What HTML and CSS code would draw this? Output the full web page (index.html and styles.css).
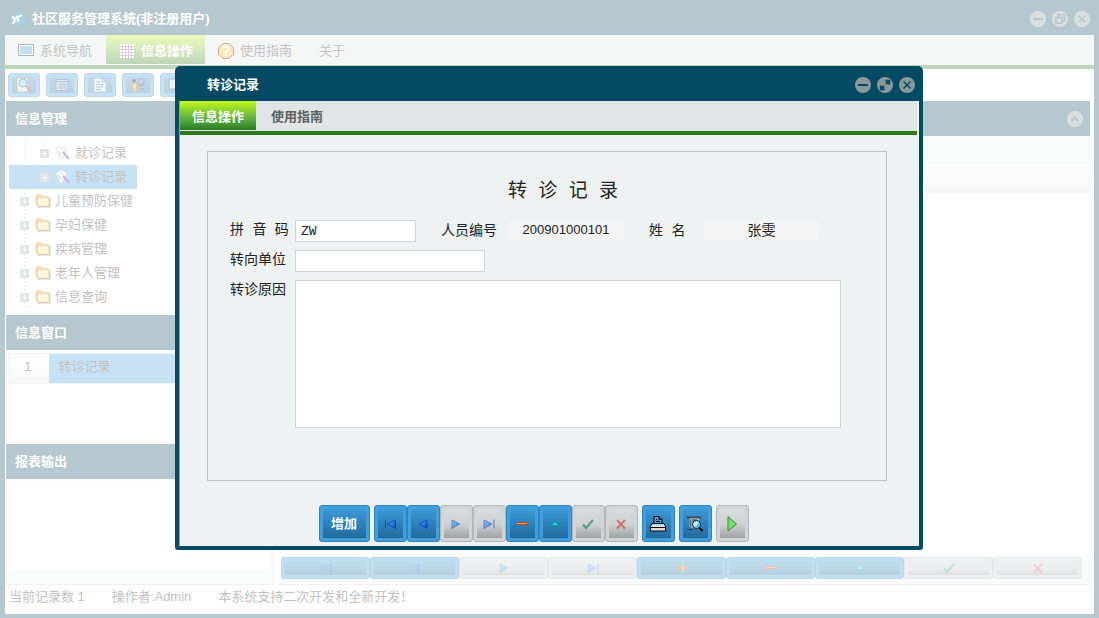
FILE: index.html
```
<!DOCTYPE html>
<html lang="zh-CN">
<head>
    <meta charset="UTF-8">
    <meta name="viewport" content="width=device-width, initial-scale=1">
    <title>社区服务管理系统</title>
    <link rel="stylesheet" href="styles.css">
</head>
<body>
    <!-- shared icons -->
    <svg class="sprite" aria-hidden="true">
        <defs>
            <linearGradient id="arrowFill" x1="0" y1="0" x2="1" y2="1">
                <stop offset="0" stop-color="#5bc4ff"/>
                <stop offset="1" stop-color="#0340b8"/>
            </linearGradient>
        </defs>
        <symbol id="first" viewBox="0 0 12 12"><path d="M1 1.500h1v9h-1z" fill="#0849c4"/><path d="M11.500 2v8.500L3.500 6z" fill="url(#arrowFill)" stroke="#0849c4"/></symbol>
        <symbol id="prev" viewBox="0 0 12 12"><path d="M10 2v8.500L2.500 6z" fill="url(#arrowFill)" stroke="#0849c4"/></symbol>
        <symbol id="next" viewBox="0 0 12 12"><path d="M2 2v8.500L9.500 6z" fill="url(#arrowFill)" stroke="#0849c4"/></symbol>
        <symbol id="last" viewBox="0 0 12 12"><path d="M10.500 1.500h1v9h-1z" fill="#0849c4"/><path d="M1 2v8.500L9 6z" fill="url(#arrowFill)" stroke="#0849c4"/></symbol>
        <symbol id="plus" viewBox="0 0 12 12"><path d="M5 1h3v3.500h3v3h-3v3.500h-3v-3.500h-3v-3h3z" fill="#e8410c"/><path d="M6 2h1v8h-1zM3 5.500h7v1h-7z" fill="#ff9a50"/></symbol>
        <symbol id="minus" viewBox="0 0 12 12"><path d="M1 4h10v3h-10z" fill="#dc3a08"/><path d="M1 5h10v1h-10z" fill="#ff9a3c"/></symbol>
        <symbol id="up" viewBox="0 0 12 12"><path d="M6 3l5.500 5h-11z" fill="#0b93a0"/><path d="M6 4l3 3h-6z" fill="#22dbe0"/></symbol>
        <symbol id="check" viewBox="0 0 12 12"><path d="M1 6.500l3 3.500 7-8" fill="none" stroke="#0a7a36" stroke-width="2"/></symbol>
        <symbol id="cross" viewBox="0 0 12 12"><path d="M2 2l8 8.500M10 2l-8 8.500" fill="none" stroke="#d63422" stroke-width="2"/></symbol>
        <symbol id="expand" viewBox="0 0 9 9"><path class="box" d="M0 0h9v9h-9z"/><path d="M4 2h1v5h-1zM2 4h5v1h-5z" fill="#fff"/></symbol>
        <symbol id="folder" viewBox="0 0 16 14"><path d="M1 3l1-2h4l1 2h7v9h-12z" fill="#f7e4b4" stroke="#e6cd98"/><path d="M3 4.500h10.500v7h-10.500z" fill="#fff8dc"/><path d="M2 13h13v-9" fill="none" stroke="#cfc8b4"/></symbol>
        <symbol id="wand" viewBox="0 0 16 16"><path d="M1 4l4-2 2-1 3 2 2 3-3 1 0 3-2 4-3-2-1-4z" fill="#fff" stroke="#e3e6e8"/><path d="M3 6l3 3M6 3l2 3M4 11l2-2" stroke="#cfd6dc" fill="none"/><path d="M8 7l6 7" stroke="#cdb4e6" stroke-width="2"/></symbol>
        <symbol id="circMin" viewBox="0 0 16 16"><circle cx="8" cy="8" r="8" class="disc"/><path d="M3 8h10" class="ink"/></symbol>
        <symbol id="circClose" viewBox="0 0 16 16"><circle cx="8" cy="8" r="8" class="disc"/><path d="M4.500 4.500l7 7M11.500 4.500l-7 7" class="ink thin"/></symbol>
        <symbol id="circRestore" viewBox="0 0 16 16"><circle cx="8" cy="8" r="8" class="disc"/><path d="M6 6v-2.500h6.500v6.500h-2.500M4 6.500h6v5.500h-6z" class="ink thin"/></symbol>
        <symbol id="circMax" viewBox="0 0 16 16"><circle cx="8" cy="8" r="8" class="disc"/><path d="M9 7l3-3M7 9l-3 3M8.500 3.800h3.700v3.700M3.800 8.500v3.700h3.700" class="ink"/></symbol>
        <symbol id="circUp" viewBox="0 0 16 16"><circle cx="8" cy="8" r="8" class="disc"/><path d="M4.500 10l3.500-3.500 3.500 3.500" class="ink"/></symbol>
    </svg>

    <div class="window">
        <header class="titlebar">
            <svg class="logo" width="16" height="14" viewBox="0 0 16 14" aria-hidden="true"><path d="M3 13q-3-1-2-5 1-3 3-3 2-5 6-4 3 1 3 4 3 2 2 5-1 3-4 3z" fill="#a9d3e6"/><path d="M2 4l3 4 2-4M5 8l-2 4M8 10v-5q2-2 4-1" fill="none" stroke="#fff" stroke-width="2"/></svg>
            <h1 class="title">社区服务管理系统(非注册用户)</h1>
            <div class="window-controls">
                <button type="button" aria-label="最小化"><svg><use href="#circMin"/></svg></button>
                <button type="button" aria-label="还原"><svg><use href="#circRestore"/></svg></button>
                <button type="button" aria-label="关闭"><svg><use href="#circClose"/></svg></button>
            </div>
        </header>

        <nav class="menu">
            <a href="#" class="menu-item">
                <svg width="16" height="16" viewBox="0 0 16 16"><path d="M.5 1.500h15v11h-15z" fill="#fff" stroke="#aab3b5"/><path d="M2 3h12v8h-12z" fill="#c2dfed"/></svg>系统导航
            </a>
            <a href="#" class="menu-item active">
                <svg width="16" height="16" viewBox="0 0 16 16"><path d="M1 1h14v14h-14z" fill="#fff"/><path d="M3.500 1v14M6.500 1v14M9.500 1v14M12.500 1v14M1 3.500h14M1 6.500h14M1 9.500h14M1 12.500h14" stroke="#d9cfe2"/></svg>信息操作
            </a>
            <a href="#" class="menu-item">
                <svg width="16" height="16" viewBox="0 0 16 16"><path d="M5 .5h6l4.500 4.500v6l-4.500 4.500h-6l-4.500-4.500v-6z" fill="#ffeab8" stroke="#c9aaa6"/><path d="M5.500 5.500q0-2 2.500-2t2.500 2q0 1.500-2.500 3v1.500M8 11v2" fill="none" stroke="#fff" stroke-width="2"/></svg>使用指南
            </a>
            <a href="#" class="menu-item">关于</a>
        </nav>

        <div class="toolbar">
            <button type="button" aria-label="预览"><svg viewBox="0 0 16 16"><path d="M1 1h11v14h-11z" fill="#f2f5f7" stroke="#d2cfcb"/><circle cx="7" cy="6" r="4" fill="#d5effa" stroke="#b2c8d4"/><path d="M10 9l4 5" stroke="#e4b6a0" stroke-width="2"/></svg></button>
            <button type="button" aria-label="表单"><svg viewBox="0 0 16 16"><path d="M2 2.500h12v11h-12z" fill="#e1edf4" stroke="#b4c6d2"/><path d="M2 4.500h12M7 5v8M4 7h2M4 9h2M4 11h2M8 7h5M8 9h5M8 11h5" stroke="#b4c6d2"/></svg></button>
            <button type="button" aria-label="文档"><svg viewBox="0 0 16 16"><path d="M2 1h8l4 4v10h-12z" fill="#f1f8fc" stroke="#c0d7e3"/><path d="M10 1v4h4M4 5h4M4 7.500h7M4 10h7M4 12.500h5" fill="none" stroke="#b4cbdc"/></svg></button>
            <button type="button" aria-label="用户"><svg viewBox="0 0 16 16"><circle cx="4" cy="4" r="2" fill="#b7a8a0"/><path d="M2 6h5v5h-1v4h-3v-4h-1z" fill="#f7e5c2" stroke="#d7c5aa"/><path d="M8 2h6v5h-6z" fill="#cfd2f2" stroke="#b9bccb"/><path d="M8 9h6M9 12h5" stroke="#c4c6c9" stroke-width="2"/></svg></button>
            <button type="button" aria-label="屏幕"><svg viewBox="0 0 16 16"><path d="M1 2h13v10h-13z" fill="#e9f4fa" stroke="#b3bec4"/><path d="M7 12h6v3" fill="none" stroke="#c9a9a9"/></svg></button>
        </div>

        <div class="workspace">
            <aside class="sidebar">
                <section class="tree-panel">
                    <h2 class="panel-title">信息管理</h2>
                    <ul class="tree">
                        <li class="child"><a href="#"><svg class="expander"><use href="#expand"/></svg><svg class="node-icon"><use href="#wand"/></svg>就诊记录</a></li>
                        <li class="child selected"><a href="#"><svg class="expander"><use href="#expand"/></svg><svg class="node-icon"><use href="#wand"/></svg>转诊记录</a></li>
                        <li><a href="#"><svg class="expander"><use href="#expand"/></svg><svg class="node-icon"><use href="#folder"/></svg>儿童预防保健</a></li>
                        <li><a href="#"><svg class="expander"><use href="#expand"/></svg><svg class="node-icon"><use href="#folder"/></svg>孕妇保健</a></li>
                        <li><a href="#"><svg class="expander"><use href="#expand"/></svg><svg class="node-icon"><use href="#folder"/></svg>疾病管理</a></li>
                        <li><a href="#"><svg class="expander"><use href="#expand"/></svg><svg class="node-icon"><use href="#folder"/></svg>老年人管理</a></li>
                        <li><a href="#"><svg class="expander"><use href="#expand"/></svg><svg class="node-icon"><use href="#folder"/></svg>信息查询</a></li>
                    </ul>
                </section>
                <section class="list-panel">
                    <h2 class="panel-title">信息窗口</h2>
                    <div class="list-body">
                        <table class="window-list">
                            <tr><th scope="row">1</th><td>转诊记录</td></tr>
                        </table>
                    </div>
                </section>
                <section class="report-panel">
                    <h2 class="panel-title">报表输出</h2>
                    <div class="report-body"></div>
                </section>
            </aside>

            <main class="content">
                <div class="panel-title content-title">
                    <button type="button" aria-label="折叠"><svg><use href="#circUp"/></svg></button>
                </div>
                <div class="filter-row"></div>
                <div class="grid-head"></div>
                <div class="grid-body"></div>
                <div class="navigator">
                    <button type="button" class="btn blue" aria-label="首记录"><svg><use href="#first"/></svg></button>
                    <button type="button" class="btn blue" aria-label="上一条"><svg><use href="#prev"/></svg></button>
                    <button type="button" class="btn gray dim" aria-label="下一条"><svg><use href="#next"/></svg></button>
                    <button type="button" class="btn gray dim" aria-label="末记录"><svg><use href="#last"/></svg></button>
                    <button type="button" class="btn blue" aria-label="新增"><svg><use href="#plus"/></svg></button>
                    <button type="button" class="btn blue" aria-label="删除"><svg><use href="#minus"/></svg></button>
                    <button type="button" class="btn blue" aria-label="编辑"><svg><use href="#up"/></svg></button>
                    <button type="button" class="btn gray dim" aria-label="保存"><svg><use href="#check"/></svg></button>
                    <button type="button" class="btn gray dim" aria-label="取消"><svg><use href="#cross"/></svg></button>
                </div>
            </main>
        </div>

        <footer class="statusbar">
            <span>当前记录数 1</span>
            <span>操作者:Admin</span>
            <span>本系统支持二次开发和全新开发！</span>
        </footer>
    </div>

    <!-- record dialog -->
    <div class="overlay">
        <div class="dialog" role="dialog" aria-labelledby="dialogTitle">
            <header class="dialog-bar">
                <h2 class="title" id="dialogTitle">转诊记录</h2>
                <div class="window-controls">
                    <button type="button" aria-label="最小化"><svg><use href="#circMin"/></svg></button>
                    <button type="button" aria-label="最大化"><svg><use href="#circMax"/></svg></button>
                    <button type="button" aria-label="关闭"><svg><use href="#circClose"/></svg></button>
                </div>
            </header>
            <form class="dialog-body">
                <nav class="tabs">
                    <a href="#" class="tab active">信息操作</a>
                    <a href="#" class="tab">使用指南</a>
                </nav>
                <div class="sheet">
                    <h3 class="sheet-title">转 诊 记 录</h3>
                    <div class="fields">
                        <label for="pinyin">拼 音 码</label>
                        <div class="field-row">
                            <input type="text" id="pinyin" class="short" value="ZW">
                            <label for="personNo">人员编号</label>
                            <output id="personNo">200901000101</output>
                            <label for="personName" class="name-label">姓 名</label>
                            <output id="personName" class="person-name">张雯</output>
                        </div>
                        <label for="unit">转向单位</label>
                        <input type="text" id="unit" class="medium">
                        <label for="reason">转诊原因</label>
                        <textarea id="reason"></textarea>
                    </div>
                </div>
                <div class="actions">
                    <button type="button" class="btn blue add">增加</button>
                    <div class="btn-group">
                        <button type="button" class="btn blue" aria-label="首记录"><svg><use href="#first"/></svg></button>
                        <button type="button" class="btn blue" aria-label="上一条"><svg><use href="#prev"/></svg></button>
                        <button type="button" class="btn gray dim" aria-label="下一条"><svg><use href="#next"/></svg></button>
                        <button type="button" class="btn gray dim" aria-label="末记录"><svg><use href="#last"/></svg></button>
                        <button type="button" class="btn blue" aria-label="删除"><svg><use href="#minus"/></svg></button>
                        <button type="button" class="btn blue" aria-label="编辑"><svg><use href="#up"/></svg></button>
                        <button type="button" class="btn gray dim" aria-label="保存"><svg><use href="#check"/></svg></button>
                        <button type="button" class="btn gray dim" aria-label="取消"><svg><use href="#cross"/></svg></button>
                    </div>
                    <button type="button" class="btn blue tool" aria-label="打印"><svg viewBox="0 0 16 16"><path d="M4 7.500v-7h5l3 3v4z" fill="#4ba5dc" stroke="#000"/><path d="M9 .5v3h3M6 3.500h1M6 5.500h4" fill="none" stroke="#000"/><path d="M2 7.500h12l1.500 3v4.500h-15v-4.500z" fill="#eee" stroke="#000"/><path d="M2 9h12" stroke="#3c9be0" stroke-dasharray="1 1"/><path d="M1 11.500h14" stroke="#000"/><path d="M1 13h14" stroke="#c8c4ac"/></svg></button>
                    <button type="button" class="btn blue tool" aria-label="打印预览"><svg viewBox="0 0 16 16"><path d="M0 1.500h14" stroke="#43484c" stroke-width="2"/><path d="M2.500 3h9v8h-9z" fill="#6ba9d2" stroke="#d9dedf"/><path d="M3 3v9M0 13.500h6M5 4h5" stroke="#333b42"/><circle cx="9.500" cy="8.500" r="4" fill="#c6f0ff" stroke="#111"/><path d="M8 11q4 0 4-4" fill="none" stroke="#3fb9ff" stroke-width="2"/><path d="M12.500 12l3 3" stroke="#000" stroke-width="2"/></svg></button>
                    <button type="button" class="btn gray tool" aria-label="执行"><svg viewBox="0 0 16 16"><path d="M4 .5v14.500l8.500-7z" fill="#62e862" stroke="#5d6b60"/></svg></button>
                </div>
            </form>
        </div>
    </div>
</body>
</html>
```

FILE: styles.css
```
* {
    box-sizing: border-box;
    margin: 0;
    padding: 0;
}
body {
    --disc: #d9dfe1;
    --ink: #b5c8cf;
    font-family: "Liberation Sans", "Noto Sans CJK SC", sans-serif;
    font-size: 13px;
    line-height: 20px;
    color: #c3c3c3;
    background: #b5c8cf;
}
a {
    color: inherit;
    text-decoration: none;
}
button {
    font: inherit;
    cursor: pointer;
}
svg {
    flex: none;
}
.sprite {
    position: absolute;
    width: 0;
    height: 0;
}
.title {
    flex: 1;
    font-size: 13px;
    font-weight: bold;
    color: #fff;
}

/* main window */
.window {
    display: flex;
    flex-direction: column;
    min-height: 100vh;
    padding: 0 5px 4px;
    background: #b5c8cf;
}
.titlebar {
    display: flex;
    align-items: center;
    gap: 6px;
    height: 35px;
    padding: 2px 4px 0 5px;
}
.window-controls {
    display: flex;
    gap: 6px;
}
.window-controls button,
.content-title button {
    width: 16px;
    height: 16px;
    border: none;
    background: none;
}
.window-controls svg,
.content-title svg {
    display: block;
    width: 16px;
    height: 16px;
}
.disc {
    fill: var(--disc);
}
.ink {
    fill: none;
    stroke: var(--ink);
    stroke-width: 2;
}
.thin {
    stroke-width: 1.5;
}
.menu {
    display: flex;
    height: 34px;
    background: #f5f7f7;
    border-bottom: 4px solid #c0d6bb;
}
.menu-item {
    display: flex;
    align-items: center;
    gap: 6px;
    padding: 2px 14px 0 13px;
    margin-bottom: 1px;
}
.menu-item.active {
    padding-right: 12px;
    font-weight: bold;
    color: #fff;
    background: linear-gradient(#eef9b9, #cfe5bf 60%, #bdd5b9);
}
.toolbar {
    display: flex;
    gap: 6px;
    height: 32px;
    padding: 4px 3px;
    background: #fff;
}
.toolbar button {
    display: flex;
    align-items: center;
    justify-content: center;
    width: 32px;
    height: 24px;
    padding: 3px;
    border: 1px solid #bdd9ed;
    border-radius: 3px;
    background: linear-gradient(#c4dcec, #bdd2e0) content-box, #c7e2f5;
}
.toolbar svg {
    width: 16px;
    height: 16px;
}
.workspace {
    display: flex;
    flex: 1;
    gap: 4px;
    padding: 0 3px 0 1px;
    background: #fdfefe;
}
.panel-title {
    height: 35px;
    padding: 0 9px;
    font-size: 13px;
    font-weight: bold;
    line-height: 35px;
    color: #fff;
    background: #b5c8cf;
}
.sidebar {
    display: flex;
    flex-direction: column;
    width: 268px;
    background: #fafcfc;
    border-right: 1px solid #f1f4f5;
    border-bottom: 1px solid #eef2f3;
}
.tree-panel {
    height: 214px;
}
.tree {
    margin: 3px;
    padding: 2px 0 1px;
    list-style: none;
    background: #fff;
}
.tree li {
    height: 24px;
    padding-left: 11px;
    background: repeating-linear-gradient(#e2e4e5 0 1px, transparent 1px 3px) 15px 0 / 1px 100% no-repeat;
}
.tree a {
    display: flex;
    align-items: center;
    gap: 4px;
    height: 24px;
}
.tree .child {
    padding-left: 31px;
    background: repeating-linear-gradient(#e2e4e5 0 1px, transparent 1px 3px) 15px 0 / 1px 100% no-repeat,
        repeating-linear-gradient(#e2e4e5 0 1px, transparent 1px 3px) 35px 0 / 1px 100% no-repeat;
}
.tree .selected {
    width: 128px;
    background: #c8e2f5;
}
.expander {
    width: 9px;
    height: 9px;
    margin-right: 2px;
}
.box {
    fill: #e2e5e6;
}
.node-icon {
    width: 16px;
    height: 16px;
}
.list-panel {
    display: flex;
    flex-direction: column;
    height: 129px;
}
.list-body {
    flex: 1;
    margin: 3px;
    background: #fff;
}
.window-list {
    width: 100%;
    border-collapse: collapse;
    border: 1px solid #eaf4fb;
}
.window-list th {
    width: 39px;
    height: 30px;
    padding: 0 3px 4px 0;
    font-weight: normal;
    background: linear-gradient(#fff, #f7f7f7);
}
.window-list td {
    padding: 0 10px 4px;
    background: #c8e2f5;
}
.report-panel {
    display: flex;
    flex: 1;
    flex-direction: column;
}
.report-body {
    flex: 1;
    margin: 3px 4px 15px 3px;
    background: #fff;
}
.content {
    display: flex;
    flex: 1;
    flex-direction: column;
    border-right: 1px solid #f3f6f7;
    border-bottom: 1px solid #eef2f3;
}
.content-title {
    display: flex;
    align-items: center;
    justify-content: flex-end;
    padding-right: 7px;
}
.filter-row {
    height: 28px;
    background: #fafcfc;
}
.grid-head {
    height: 29px;
    background: linear-gradient(#fff, #f7f7f7);
    border-bottom: 1px solid #f3f3f3;
}
.grid-body {
    flex: 1;
    background: #fff;
}
.navigator {
    display: flex;
    height: 31px;
    padding: 4px 8px 5px 3px;
    background: #fafcfc;
}
.navigator .btn {
    flex: 1;
    height: 22px;
    opacity: 0.3;
}
.statusbar {
    display: flex;
    gap: 27px;
    height: 29px;
    padding: 2px 4px;
    background: #fff;
    border-bottom: 5px solid #fafcfc;
}

/* toolbar and navigator buttons */
.btn {
    display: flex;
    align-items: center;
    justify-content: center;
    padding: 3px;
    border-radius: 3px;
    color: #fff;
}
.btn svg {
    width: 12px;
    height: 12px;
}
.blue {
    border: 1px solid #2f84bd;
    background: linear-gradient(#3d9ad6, #216a9e) content-box, #429fdd;
}
.gray {
    border: 1px solid #b3b7b8;
    background: linear-gradient(#d9dddd, #cdd0d1 55%, #9ea2a3) content-box, #d2d5d6;
}
.dim svg {
    opacity: 0.6;
}

/* record dialog */
.overlay {
    position: fixed;
    inset: 0;
    display: flex;
    align-items: center;
    justify-content: center;
    padding: 0 176px 2px 175px;
}
.dialog {
    --disc: #8b999c;
    --ink: #044a63;
    flex: 1;
    min-width: 700px;
    padding: 0 4px 4px;
    border-radius: 5px 5px 3px 3px;
    background: #044a63;
}
.dialog-bar {
    display: flex;
    align-items: center;
    height: 35px;
    padding: 2px 4px 0 28px;
}
.dialog-body {
    padding: 0 2px 4px 0;
    border-left: 1px solid #8aa4ae;
    background: #eef2f3;
    color: #222;
}
.tabs {
    display: flex;
    height: 34px;
    background: #e0e5e5;
    border-bottom: 4px solid #2b7b1d;
}
.tab {
    padding: 6px 15px 0;
    margin-bottom: 1px;
    font-weight: bold;
    color: #5b6263;
}
.tab.active {
    padding: 6px 12px 0;
    color: #fff;
    background: linear-gradient(#c3f81a, #55ac40 65%, #2b7b20);
}
.sheet {
    min-height: 330px;
    margin: 16px 30px 24px 27px;
    padding: 26px 22px;
    border: 1px solid #bcc1c3;
}
.sheet-title {
    margin: 0 12px 14px 44px;
    font-family: "Liberation Mono", "Noto Sans CJK SC", monospace;
    font-size: 19px;
    font-weight: normal;
    line-height: 28px;
    text-align: center;
}
.fields {
    display: grid;
    grid-template-columns: 57px 1fr;
    gap: 8px;
    font-family: "Liberation Mono", "Noto Sans CJK SC", monospace;
    font-size: 14px;
}
.fields label {
    line-height: 20px;
    white-space: nowrap;
}
.field-row {
    display: flex;
}
.field-row label {
    margin: 1px 11px 0 25px;
}
.field-row .name-label {
    margin-right: 18px;
}
.fields input,
.fields textarea {
    height: 22px;
    padding: 0 5px;
    border: 1px solid #d0d4d5;
    background: #fff;
    font-family: "Liberation Mono", "Noto Sans CJK SC", monospace;
    font-size: 13px;
    color: #222;
}
.fields .short {
    width: 121px;
}
.fields .medium {
    width: 190px;
}
.fields textarea {
    display: block;
    width: 546px;
    max-width: 100%;
    height: 148px;
    resize: none;
}
.fields output {
    width: 116px;
    height: 18px;
    margin-top: 1px;
    font-family: "Liberation Sans", "Noto Sans CJK SC", sans-serif;
    font-size: 13px;
    line-height: 18px;
    text-align: center;
    background: #f3f3f3;
}
.fields .person-name {
    font-size: 14px;
}
.actions {
    display: flex;
    justify-content: center;
    gap: 4px;
    padding-right: 30px;
}
.actions .btn {
    width: 33px;
    height: 37px;
}
.actions .add {
    width: 51px;
    font-weight: bold;
}
.btn-group {
    display: flex;
}
.actions .tool svg {
    width: 16px;
    height: 16px;
}
```
